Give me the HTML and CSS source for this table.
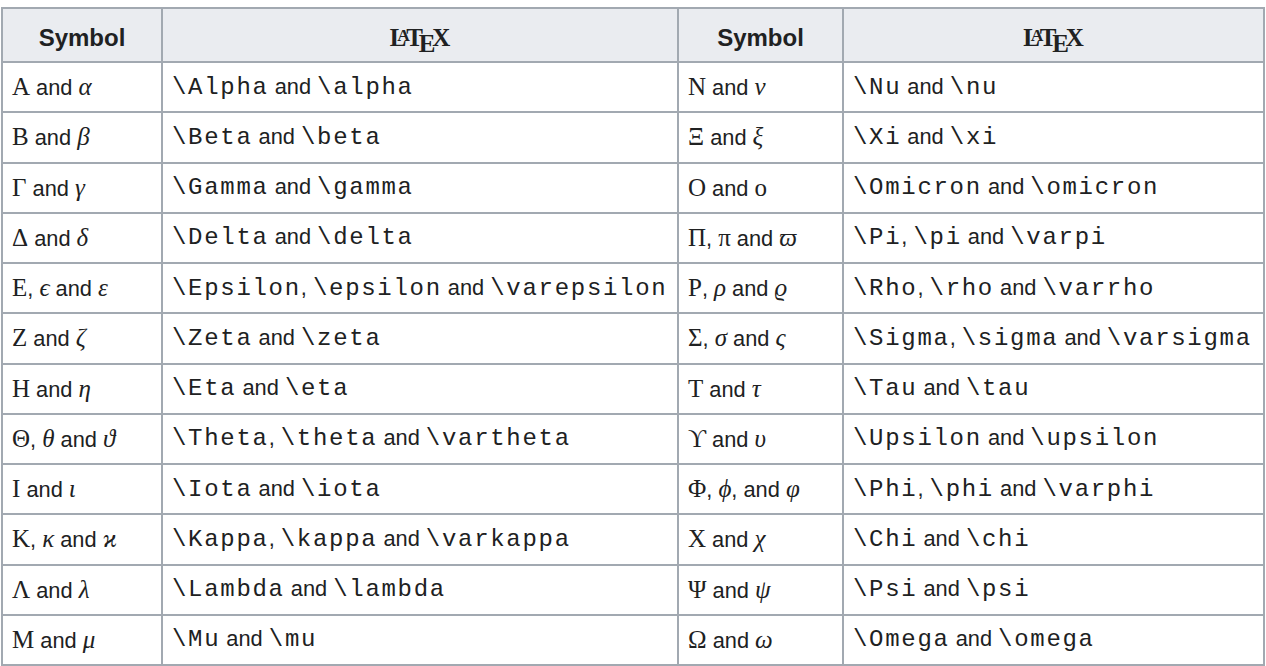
FILE: index.html
```html
<!DOCTYPE html>
<html>
<head>
<meta charset="utf-8">
<link rel="stylesheet" href="styles.css">
</head>
<body>
<table class="greek">
  <colgroup>
    <col class="c-sym1"><col class="c-tex1"><col class="c-sym2"><col class="c-tex2">
  </colgroup>
  <thead>
    <tr class="head">
      <th>Symbol</th>
      <th><span class="latex"><span class="ll">L</span><span class="la">A</span><span class="lt">T</span><span class="le">E</span>X</span></th>
      <th>Symbol</th>
      <th><span class="latex"><span class="ll">L</span><span class="la">A</span><span class="lt">T</span><span class="le">E</span>X</span></th>
    </tr>
  </thead>
  <tbody>
    <tr>
      <td><span class="m up">A</span> and <span class="m">α</span></td>
      <td><code>\Alpha</code> and <code>\alpha</code></td>
      <td><span class="m up">N</span> and <span class="m">ν</span></td>
      <td><code>\Nu</code> and <code>\nu</code></td>
    </tr>
    <tr>
      <td><span class="m up">B</span> and <span class="m">β</span></td>
      <td><code>\Beta</code> and <code>\beta</code></td>
      <td><span class="m up">Ξ</span> and <span class="m">ξ</span></td>
      <td><code>\Xi</code> and <code>\xi</code></td>
    </tr>
    <tr>
      <td><span class="m up">Γ</span> and <span class="m">γ</span></td>
      <td><code>\Gamma</code> and <code>\gamma</code></td>
      <td><span class="m up">O</span> and <span class="m up">o</span></td>
      <td><code>\Omicron</code> and <code>\omicron</code></td>
    </tr>
    <tr>
      <td><span class="m up">Δ</span> and <span class="m">δ</span></td>
      <td><code>\Delta</code> and <code>\delta</code></td>
      <td><span class="m up">Π</span>, <span class="m up">π</span> and <span class="m">ϖ</span></td>
      <td><code>\Pi</code>, <code>\pi</code> and <code>\varpi</code></td>
    </tr>
    <tr>
      <td><span class="m up">E</span>, <span class="m">ϵ</span> and <span class="m">ε</span></td>
      <td><code>\Epsilon</code>, <code>\epsilon</code> and <code>\varepsilon</code></td>
      <td><span class="m up">P</span>, <span class="m">ρ</span> and <span class="m">ϱ</span></td>
      <td><code>\Rho</code>, <code>\rho</code> and <code>\varrho</code></td>
    </tr>
    <tr>
      <td><span class="m up">Z</span> and <span class="m">ζ</span></td>
      <td><code>\Zeta</code> and <code>\zeta</code></td>
      <td><span class="m up">Σ</span>, <span class="m">σ</span> and <span class="m">ς</span></td>
      <td><code>\Sigma</code>, <code>\sigma</code> and <code>\varsigma</code></td>
    </tr>
    <tr>
      <td><span class="m up">H</span> and <span class="m">η</span></td>
      <td><code>\Eta</code> and <code>\eta</code></td>
      <td><span class="m up">T</span> and <span class="m">τ</span></td>
      <td><code>\Tau</code> and <code>\tau</code></td>
    </tr>
    <tr>
      <td><span class="m up">Θ</span>, <span class="m">θ</span> and <span class="m">ϑ</span></td>
      <td><code>\Theta</code>, <code>\theta</code> and <code>\vartheta</code></td>
      <td><span class="m up">ϒ</span> and <span class="m">υ</span></td>
      <td><code>\Upsilon</code> and <code>\upsilon</code></td>
    </tr>
    <tr>
      <td><span class="m up">I</span> and <span class="m">ι</span></td>
      <td><code>\Iota</code> and <code>\iota</code></td>
      <td><span class="m up">Φ</span>, <span class="m">ϕ</span>, and <span class="m">φ</span></td>
      <td><code>\Phi</code>, <code>\phi</code> and <code>\varphi</code></td>
    </tr>
    <tr>
      <td><span class="m up">K</span>, <span class="m">κ</span> and <span class="m">ϰ</span></td>
      <td><code>\Kappa</code>, <code>\kappa</code> and <code>\varkappa</code></td>
      <td><span class="m up">X</span> and <span class="m">χ</span></td>
      <td><code>\Chi</code> and <code>\chi</code></td>
    </tr>
    <tr>
      <td><span class="m up">Λ</span> and <span class="m">λ</span></td>
      <td><code>\Lambda</code> and <code>\lambda</code></td>
      <td><span class="m up">Ψ</span> and <span class="m">ψ</span></td>
      <td><code>\Psi</code> and <code>\psi</code></td>
    </tr>
    <tr>
      <td><span class="m up">M</span> and <span class="m">μ</span></td>
      <td><code>\Mu</code> and <code>\mu</code></td>
      <td><span class="m up">Ω</span> and <span class="m">ω</span></td>
      <td><code>\Omega</code> and <code>\omega</code></td>
    </tr>
  </tbody>
</table>
</body>
</html>
```

FILE: styles.css
```css
html, body {
  margin: 0;
  padding: 0;
  background: #ffffff;
}

body {
  font-family: "Liberation Sans", Arial, sans-serif;
  font-size: 21.8px;
  color: #202122;
}

.greek {
  margin: 7px 0 0 1px;
  border-collapse: collapse;
  table-layout: fixed;
  width: 1262px;
  border: 2px solid #a2a9b1;
}

.c-sym1 { width: 160px; }
.c-tex1 { width: 516px; }
.c-sym2 { width: 165px; }
.c-tex2 { width: 421px; }

.greek th,
.greek td {
  border: 2px solid #a2a9b1;
  padding: 0 9px;
  white-space: nowrap;
  vertical-align: middle;
}

.greek th {
  background: #eaecf0;
  font-weight: bold;
  font-size: 24px;
  text-align: center;
  padding-top: 6px;
}

.head {
  height: 54px;
}

.greek tbody tr {
  height: 50.25px;
}

.greek td {
  text-align: left;
}

.m {
  font-family: "Liberation Serif", "DejaVu Serif", serif;
  font-style: italic;
  font-size: 25px;
}

.m.up {
  font-style: normal;
}

code {
  font-family: "Liberation Mono", "Courier New", monospace;
  font-size: 24px;
  letter-spacing: 1.7px;
}

.latex {
  font-family: "Liberation Serif", "Times New Roman", serif;
  font-weight: bold;
  font-size: 25px;
}

.ll {
  letter-spacing: -0.36em;
}

.la {
  display: inline-block;
  font-size: 70%;
  letter-spacing: -0.214em;
  vertical-align: 0.3em;
  line-height: 0;
}

.lt {
  letter-spacing: -0.1667em;
}

.le {
  display: inline-block;
  letter-spacing: -0.125em;
  vertical-align: -0.5ex;
  line-height: 0;
}
```
